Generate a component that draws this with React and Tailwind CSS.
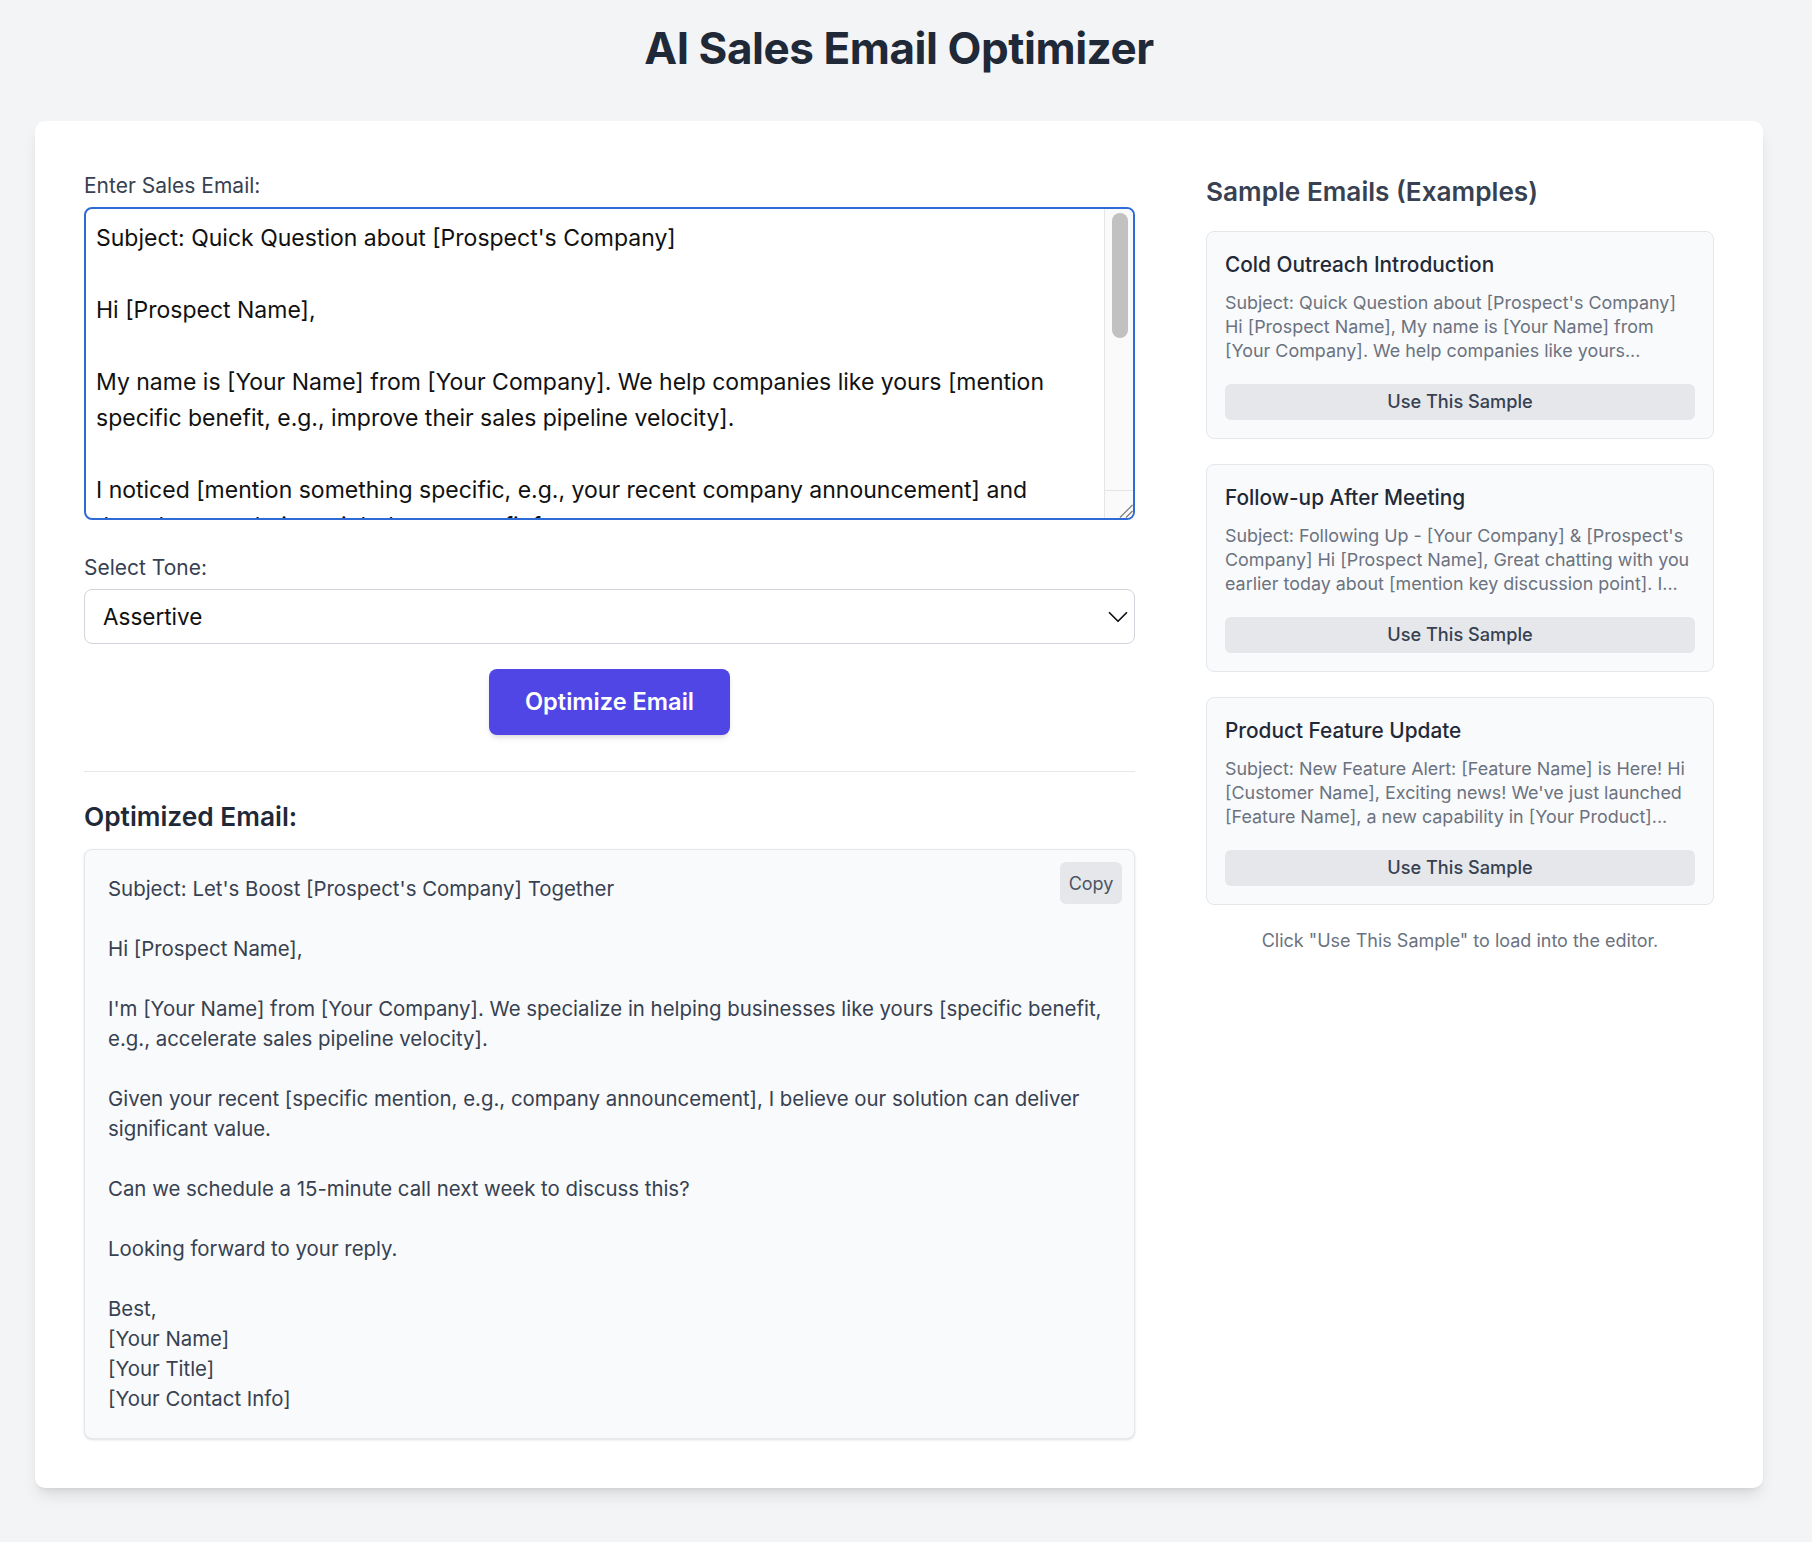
import React from "react";
import { ChevronDown } from "lucide-react";

const draft = `Subject: Quick Question about [Prospect's Company]

Hi [Prospect Name],

My name is [Your Name] from [Your Company]. We help companies like yours [mention specific benefit, e.g., improve their sales pipeline velocity].

I noticed [mention something specific, e.g., your recent company announcement] and thought our solution might be a great fit for your team.

Would you be open to a quick 15-minute call next week to discuss this further?

Looking forward to hearing from you.

Best regards,
[Your Name]
[Your Title]
[Your Company]`;

const optimized = `Subject: Let's Boost [Prospect's Company] Together

Hi [Prospect Name],

I'm [Your Name] from [Your Company]. We specialize in helping businesses like yours [specific benefit, e.g., accelerate sales pipeline velocity].

Given your recent [specific mention, e.g., company announcement], I believe our solution can deliver significant value.

Can we schedule a 15-minute call next week to discuss this?

Looking forward to your reply.

Best,
[Your Name]
[Your Title]
[Your Contact Info]`;

const samples = [
  {
    title: "Cold Outreach Introduction",
    body: "Subject: Quick Question about [Prospect's Company] Hi [Prospect Name], My name is [Your Name] from [Your Company]. We help companies like yours...",
  },
  {
    title: "Follow-up After Meeting",
    body: "Subject: Following Up - [Your Company] & [Prospect's Company] Hi [Prospect Name], Great chatting with you earlier today about [mention key discussion point]. I...",
  },
  {
    title: "Product Feature Update",
    body: "Subject: New Feature Alert: [Feature Name] is Here! Hi [Customer Name], Exciting news! We've just launched [Feature Name], a new capability in [Your Product]...",
  },
];

export default function App() {
  return (
    <div className="min-h-screen bg-[#f3f4f6] pl-[35px] pr-[49px] pt-[24px] pb-[55px] font-['Inter',sans-serif]">
      <h1 className="text-center text-[44px] leading-[49px] font-bold text-[#1f2937] mb-[48px] tracking-[-0.01em]">
        AI Sales Email Optimizer
      </h1>

      <div className="bg-white rounded-[10px] shadow-lg p-[49px] grid grid-cols-[1051px_508px] gap-x-[71px]">
        {/* Left column */}
        <div className="flex flex-col">
          <label className="block text-[21px] leading-[28px] font-normal text-[#374151] mt-[2px] mb-[7px]">
            Enter Sales Email:
          </label>
          <div className="flex h-[313px] border-2 border-[#2f6bd6] rounded-[8px] overflow-hidden bg-white">
            <textarea
              defaultValue={draft}
              className="flex-1 h-full resize-none bg-transparent text-[23px] leading-[36px] text-[#111111] pl-[10px] pr-[8px] py-[11px] outline-none overflow-hidden"
            />
            <div className="w-[29px] flex flex-col bg-[#fafafa] border-l border-[#e6e6e6]">
              <div className="flex-1 pt-[4px] pl-[7px]">
                <div className="w-[16px] h-[125px] rounded-full bg-[#c1c1c1]" />
              </div>
              <div className="h-[28px] border-t border-[#e6e6e6] flex items-end justify-end">
                <svg width="16" height="16" viewBox="0 0 16 16" className="block">
                  <line x1="3" y1="15.5" x2="15.5" y2="3" stroke="#7a7a7a" strokeWidth="1.2" />
                  <line x1="9" y1="15.5" x2="15.5" y2="9" stroke="#7a7a7a" strokeWidth="1.2" />
                </svg>
              </div>
            </div>
          </div>

          <label className="block text-[21px] leading-[28px] font-normal text-[#374151] mt-[34px] mb-[7px]">
            Select Tone:
          </label>
          <div className="relative">
            <select
              defaultValue="Assertive"
              className="block w-full h-[55px] appearance-none bg-white border border-[#d1d5db] rounded-[8px] pl-[18px] text-[22.5px] text-[#111111] outline-none"
            >
              <option>Professional</option>
              <option>Friendly</option>
              <option>Assertive</option>
              <option>Persuasive</option>
            </select>
            <ChevronDown
              className="absolute right-0 top-[11px] w-[34px] h-[34px] text-[#111111] pointer-events-none"
              strokeWidth={1.2}
            />
          </div>

          <div className="flex justify-center mt-[25px]">
            <button className="h-[66px] px-[36px] rounded-[8px] bg-[#4f46e5] text-white text-[23.6px] font-semibold shadow-md">
              Optimize Email
            </button>
          </div>

          <div className="border-t border-[#e5e7eb] mt-[36px]" />

          <h2 className="text-[26.3px] leading-[36px] font-semibold text-[#1f2937] mt-[27px] mb-[14px]">
            Optimized Email:
          </h2>

          <div className="relative border border-[#e5e7eb] bg-[#f9fafb] rounded-[8px] shadow-sm pl-[23px] pr-[16px] py-[24px]">
            <div className="whitespace-pre-wrap text-[20.4px] leading-[30px] text-[#374151]">
              {optimized}
            </div>
            <button className="absolute top-[12px] right-[12px] w-[62px] h-[42px] rounded-[6px] bg-[#e5e7eb] text-[18px] text-[#4b5563]">
              Copy
            </button>
          </div>
        </div>

        {/* Right column */}
        <div>
          <h2 className="text-[26.2px] leading-[44px] font-semibold text-[#374151] mb-[17px]">
            Sample Emails (Examples)
          </h2>
          <div className="flex flex-col gap-[25px]">
            {samples.map((s) => (
              <div
                key={s.title}
                className="border border-[#e5e7eb] bg-[#f9fafb] rounded-[8px] p-[18px]"
              >
                <h3 className="text-[20.8px] leading-[30px] font-medium text-[#1f2937] mb-[11px]">
                  {s.title}
                </h3>
                <p className="text-[17.9px] leading-[24px] text-[#6b7280]">{s.body}</p>
                <button className="mt-[21px] w-full h-[36px] rounded-[6px] bg-[#e5e7eb] text-[18.2px] font-medium text-[#374151]">
                  Use This Sample
                </button>
              </div>
            ))}
          </div>
          <p className="mt-[24px] text-center text-[18px] leading-[24px] text-[#6b7280]">
            Click "Use This Sample" to load into the editor.
          </p>
        </div>
      </div>
    </div>
  );
}
